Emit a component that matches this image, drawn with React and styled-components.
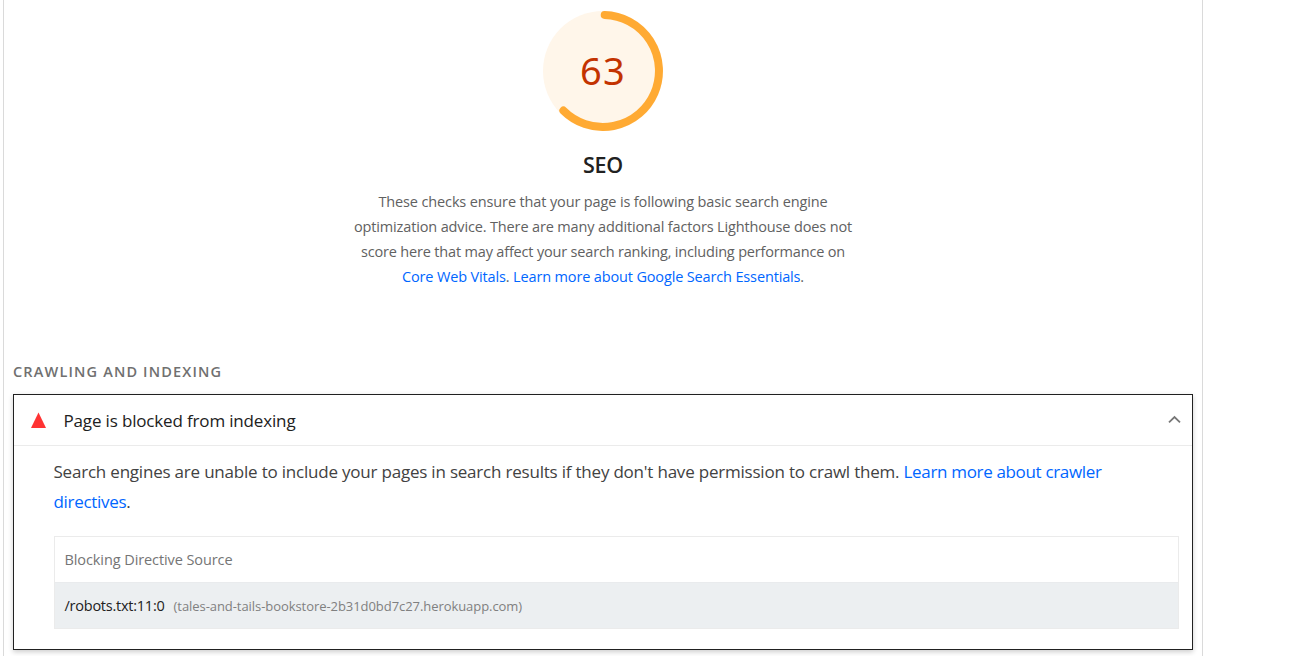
import React from 'react';
import styled, { createGlobalStyle } from 'styled-components';

const GlobalStyle = createGlobalStyle`
  *, *::before, *::after { box-sizing: border-box; }
  body {
    margin: 0;
    background: #fff;
    color: #212121;
    font-family: "Open Sans", "Noto Sans", sans-serif;
    overflow: hidden;
  }
`;

const Report = styled.main`
  width: 1200px;
  height: 656px;
  margin-left: 3px;
  padding: 11px 9px 0;
  border: solid #dadada;
  border-width: 0 1px;
`;

const CategoryHeader = styled.header`
  display: flex;
  flex-direction: column;
  align-items: center;
  height: 351px;
`;

const Gauge = styled.div`
  display: grid;
  width: 120px;
  height: 120px;
  > * { grid-area: 1 / 1; }
`;

const Score = styled.span`
  place-self: center;
  font: 38px/48px "Noto Sans", sans-serif;
  letter-spacing: 1.2px;
  color: #c33300;
  padding-bottom: 2px;
`;

const CategoryTitle = styled.h1`
  margin: 19px 0 0;
  font-size: 21.5px;
  font-weight: 600;
  line-height: 30px;
  letter-spacing: -0.2px;
`;

const Description = styled.p`
  margin: 9px 0 0;
  font-size: 14.5px;
  line-height: 25px;
  text-align: center;
  color: #616161;
`;

const Line = styled.span`
  display: block;
  white-space: pre;
  letter-spacing: ${(p) => p.$tracking}px;
`;

const Link = styled.a`
  color: #06f;
  text-decoration: none;
  letter-spacing: ${(p) => (p.$tracking ? `${p.$tracking}px` : 'inherit')};
`;

const GroupTitle = styled.h2`
  margin: 0 0 12px;
  font-size: 14.5px;
  font-weight: 600;
  line-height: 20px;
  letter-spacing: 1.16px;
  text-transform: uppercase;
  color: #707070;
`;

const Audit = styled.section`
  width: 1180px;
  height: 256px;
  border: 1px solid #212121;
  box-shadow: 0 2px 5px rgba(0, 0, 0, 0.2);
`;

const AuditHeader = styled.div`
  display: flex;
  align-items: center;
  height: 51px;
  padding: 0 11px 0 16px;
  border-bottom: 1px solid #ebebeb;
`;

const AuditTitle = styled.span`
  flex: 1;
  margin-left: 17.5px;
  padding-top: 1px;
  font-size: 17px;
  line-height: 24px;
  letter-spacing: -0.16px;
`;

const AuditText = styled.p`
  margin: 11px 0 0 39.5px;
  font-size: 17px;
  line-height: 30px;
  color: #424242;
`;

const Table = styled.div`
  width: 1125px;
  margin: 19px 0 0 40px;
  border: 1px solid #ebebeb;
`;

const TableRow = styled.div`
  display: flex;
  align-items: center;
  height: ${(p) => (p.$shaded ? 46 : 45)}px;
  padding: 1px 9.5px 0;
  font-size: 14.5px;
  line-height: 20px;
  letter-spacing: ${(p) => (p.$shaded ? -0.24 : -0.09)}px;
  color: ${(p) => (p.$shaded ? '#212121' : '#757575')};
  background: ${(p) => (p.$shaded ? '#eceff1' : '#fff')};
  ${(p) => p.$shaded && 'border-top: 1px solid #e9ebed;'}
`;

const Host = styled.span`
  margin-left: 9px;
  font-size: 13px;
  letter-spacing: -0.06px;
  color: #808080;
`;

const FailIcon = () => (
  <svg width="16" height="16" viewBox="0 0 16 16" aria-hidden="true">
    <path d="M8.5 .5 16 16H1Z" fill="#f33" />
  </svg>
);

const Chevron = () => (
  <svg width="13" height="10" viewBox="0 0 13 10" aria-hidden="true">
    <path d="M1 7.4 6.5 2.1 12 7.4" fill="none" stroke="#777" strokeWidth="1.8" />
  </svg>
);

export default function App() {
  return (
    <>
      <GlobalStyle />
      <Report>
        <CategoryHeader>
          <Gauge>
            <svg width="120" height="120" viewBox="0 0 120 120" aria-hidden="true">
              <circle cx="60" cy="60" r="60" fill="#fff6ea" />
              <path d="M61.7 4A56 56 0 1 1 20.4 99.6" fill="none" stroke="#fa3" strokeWidth="8" strokeLinecap="round" />
            </svg>
            <Score>63</Score>
          </Gauge>
          <CategoryTitle>SEO</CategoryTitle>
          <Description>
            <Line $tracking={-0.131}>These checks ensure that your page is following basic search engine</Line>
            <Line $tracking={-0.143}>optimization advice. There are many additional factors Lighthouse does not</Line>
            <Line $tracking={-0.178}>score here that may affect your search ranking, including performance on</Line>
            <Line $tracking={-0.146}>
              <Link>Core Web Vitals</Link>. <Link>Learn more about Google Search Essentials</Link>.
            </Line>
          </Description>
        </CategoryHeader>

        <GroupTitle>Crawling and indexing</GroupTitle>
        <Audit>
          <AuditHeader>
            <FailIcon />
            <AuditTitle>Page is blocked from indexing</AuditTitle>
            <Chevron />
          </AuditHeader>
          <AuditText>
            <Line $tracking={-0.208}>
              Search engines are unable to include your pages in search results if they don't have permission to crawl them.{' '}
              <Link $tracking={-0.333}>Learn more about crawler</Link>
            </Line>
            <Line $tracking={-0.3}>
              <Link>directives</Link>.
            </Line>
          </AuditText>
          <Table>
            <TableRow>Blocking Directive Source</TableRow>
            <TableRow $shaded>
              /robots.txt:11:0
              <Host>(tales-and-tails-bookstore-2b31d0bd7c27.herokuapp.com)</Host>
            </TableRow>
          </Table>
        </Audit>
      </Report>
    </>
  );
}
